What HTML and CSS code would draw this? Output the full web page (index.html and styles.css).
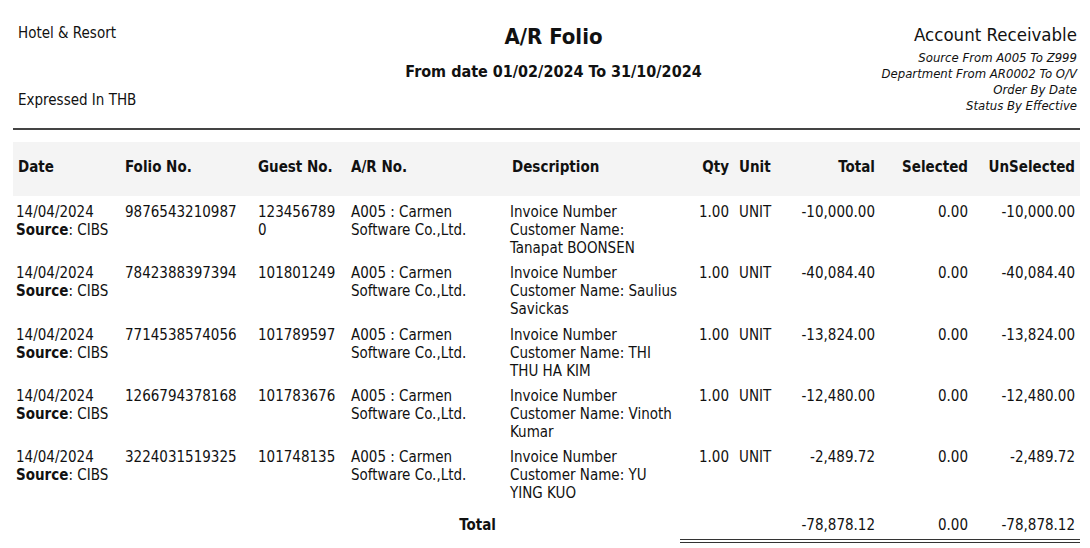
FILE: index.html
```html
<!DOCTYPE html>
<html>
<head>
<meta charset="utf-8">
<link rel="stylesheet" href="styles.css">
</head>
<body>
<div class="page">
  <header class="report-head">
    <div class="head-left">
      <div class="company">Hotel &amp; Resort</div>
      <div class="currency">Expressed In THB</div>
    </div>
    <div class="head-center">
      <div class="title">A/R Folio</div>
      <div class="subtitle">From date 01/02/2024 To 31/10/2024</div>
    </div>
    <div class="head-right">
      <div class="module">Account Receivable</div>
      <div class="crit">Source From A005 To Z999</div>
      <div class="crit">Department From AR0002 To O/V</div>
      <div class="crit">Order By Date</div>
      <div class="crit">Status By Effective</div>
    </div>
  </header>
  <div class="rule"></div>

  <table class="grid">
    <colgroup>
      <col class="c-date"><col class="c-folio"><col class="c-guest"><col class="c-ar"><col class="c-desc">
      <col class="c-qty"><col class="c-unit"><col class="c-total"><col class="c-sel"><col class="c-unsel">
    </colgroup>
    <thead>
      <tr>
        <th class="first">Date</th>
        <th>Folio No.</th>
        <th>Guest No.</th>
        <th>A/R No.</th>
        <th class="desc-h">Description</th>
        <th class="num qty">Qty</th>
        <th>Unit</th>
        <th class="num">Total</th>
        <th class="num">Selected</th>
        <th class="num last">UnSelected</th>
      </tr>
    </thead>
    <tbody>
      <tr>
        <td>14/04/2024<br><b>Source</b>: CIBS</td>
        <td>9876543210987</td>
        <td class="guest">1234567890</td>
        <td>A005 : Carmen Software Co.,Ltd.</td>
        <td class="desc">Invoice Number<br>Customer Name: Tanapat BOONSEN</td>
        <td class="num qty">1.00</td>
        <td>UNIT</td>
        <td class="num">-10,000.00</td>
        <td class="num">0.00</td>
        <td class="num last">-10,000.00</td>
      </tr>
      <tr>
        <td>14/04/2024<br><b>Source</b>: CIBS</td>
        <td>7842388397394</td>
        <td class="guest">101801249</td>
        <td>A005 : Carmen Software Co.,Ltd.</td>
        <td class="desc">Invoice Number<br>Customer Name: Saulius Savickas</td>
        <td class="num qty">1.00</td>
        <td>UNIT</td>
        <td class="num">-40,084.40</td>
        <td class="num">0.00</td>
        <td class="num last">-40,084.40</td>
      </tr>
      <tr>
        <td>14/04/2024<br><b>Source</b>: CIBS</td>
        <td>7714538574056</td>
        <td class="guest">101789597</td>
        <td>A005 : Carmen Software Co.,Ltd.</td>
        <td class="desc">Invoice Number<br>Customer Name: THI THU HA KIM</td>
        <td class="num qty">1.00</td>
        <td>UNIT</td>
        <td class="num">-13,824.00</td>
        <td class="num">0.00</td>
        <td class="num last">-13,824.00</td>
      </tr>
      <tr>
        <td>14/04/2024<br><b>Source</b>: CIBS</td>
        <td>1266794378168</td>
        <td class="guest">101783676</td>
        <td>A005 : Carmen Software Co.,Ltd.</td>
        <td class="desc">Invoice Number<br>Customer Name: Vinoth Kumar</td>
        <td class="num qty">1.00</td>
        <td>UNIT</td>
        <td class="num">-12,480.00</td>
        <td class="num">0.00</td>
        <td class="num last">-12,480.00</td>
      </tr>
      <tr>
        <td>14/04/2024<br><b>Source</b>: CIBS</td>
        <td>3224031519325</td>
        <td class="guest">101748135</td>
        <td>A005 : Carmen Software Co.,Ltd.</td>
        <td class="desc">Invoice Number<br>Customer Name: YU YING KUO</td>
        <td class="num qty">1.00</td>
        <td>UNIT</td>
        <td class="num">-2,489.72</td>
        <td class="num">0.00</td>
        <td class="num last">-2,489.72</td>
      </tr>
    </tbody>
    <tfoot>
      <tr>
        <td colspan="4" class="total-label">Total</td>
        <td></td>
        <td></td>
        <td></td>
        <td class="num">-78,878.12</td>
        <td class="num">0.00</td>
        <td class="num last">-78,878.12</td>
      </tr>
    </tfoot>
  </table>
  <div class="double-rule"></div>
</div>
</body>
</html>
```

FILE: styles.css
```css
html, body {
  margin: 0;
  padding: 0;
  background: #ffffff;
}

.page {
  width: 1067px;
  margin-left: 13px;
  font-family: "DejaVu Sans Condensed", "DejaVu Sans", sans-serif;
  color: #111;
}

.report-head {
  display: grid;
  grid-template-columns: 1fr auto 1fr;
  padding-top: 24px;
  padding-bottom: 14px;
}

.head-left {
  padding-left: 5px;
  font-size: 15px;
  line-height: 18px;
}

.currency {
  margin-top: 49px;
}

.head-center {
  text-align: center;
  padding-left: 14px;
}

.title {
  font-weight: bold;
  font-size: 22px;
  line-height: 26px;
}

.subtitle {
  margin-top: 13px;
  font-weight: bold;
  font-size: 16px;
  line-height: 18px;
}

.head-right {
  text-align: right;
  padding-right: 3px;
}

.module {
  font-size: 18.5px;
  line-height: 22px;
}

.crit {
  font-style: italic;
  font-size: 13px;
  line-height: 16px;
}

.module + .crit {
  margin-top: 4px;
}

.rule {
  height: 2px;
  background: #444;
}

.grid {
  margin-top: 12px;
  width: 1067px;
  table-layout: fixed;
  border-collapse: collapse;
  font-size: 15px;
  line-height: 18px;
}

.c-date { width: 109px; }
.c-folio { width: 133px; }
.c-guest { width: 93px; }
.c-ar { width: 159px; }
.c-desc { width: 183px; }
.c-qty { width: 46px; }
.c-unit { width: 54px; }
.c-total { width: 88px; }
.c-sel { width: 93px; }
.c-unsel { width: 109px; }

.grid thead th {
  background: #f4f4f4;
  height: 49px;
  padding: 0 3px 5px 3px;
  text-align: left;
  vertical-align: middle;
  font-weight: bold;
}

.grid thead th.first {
  padding-left: 5px;
}

.grid thead th.desc-h {
  padding-left: 5px;
}

.grid tbody td {
  vertical-align: top;
  padding: 7px 3px 0.25px 3px;
  text-align: left;
}

.grid td.guest {
  padding-right: 10px;
  overflow-wrap: anywhere;
}

.grid td.desc {
  padding-right: 12px;
}

.grid .num {
  text-align: right;
}

.grid .qty {
  padding-right: 7px;
}

.grid .last {
  padding-right: 5px;
}

.grid tfoot td {
  padding: 14px 3px 0 3px;
  vertical-align: top;
}

.grid tfoot td.total-label {
  text-align: right;
  font-weight: bold;
  padding-right: 11px;
}

.double-rule {
  margin-top: 5px;
  margin-left: 667px;
  width: 400px;
  height: 2px;
  border-top: 1px solid #333;
  border-bottom: 1px solid #333;
}
```
